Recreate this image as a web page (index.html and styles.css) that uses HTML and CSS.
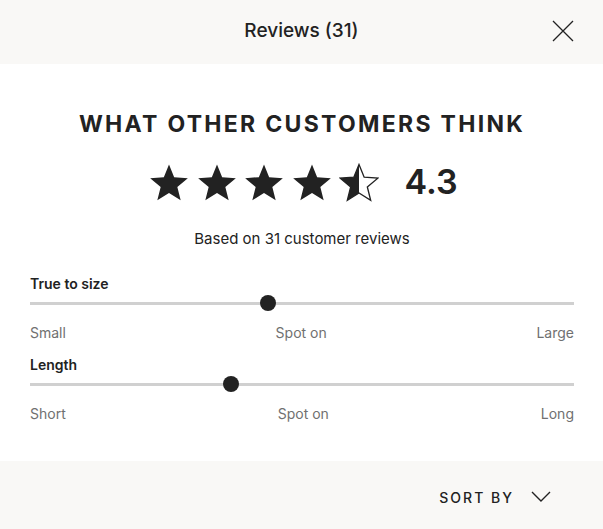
FILE: index.html
```html
<!DOCTYPE html>
<html lang="en">
<head>
    <meta charset="UTF-8">
    <meta name="viewport" content="width=device-width, initial-scale=1.0">
    <title>Reviews</title>
    <link rel="stylesheet" href="styles.css">
</head>
<body>

    <div class="modal">
        <!-- Header -->
        <div class="modal-header">
            <h2>Reviews (31)</h2>
            <button class="close-btn" aria-label="Close">
                <svg width="22" height="22" viewBox="0 0 22 22"><path d="M1 1L21 21M21 1L1 21" stroke="#222" stroke-width="1.3" fill="none"/></svg>
            </button>
        </div>

        <!-- Summary -->
        <div class="modal-body">
            <h1>What other customers think</h1>
            <div class="rating">
                <div class="stars">
                    <svg class="star" viewBox="0 0 24 24"><path d="M12 1.5l3.1 7.6 8.2.6-6.3 5.3 2 8L12 18.6 5 23l2-8L.7 9.7l8.2-.6z" fill="#222"/></svg>
                    <svg class="star" viewBox="0 0 24 24"><path d="M12 1.5l3.1 7.6 8.2.6-6.3 5.3 2 8L12 18.6 5 23l2-8L.7 9.7l8.2-.6z" fill="#222"/></svg>
                    <svg class="star" viewBox="0 0 24 24"><path d="M12 1.5l3.1 7.6 8.2.6-6.3 5.3 2 8L12 18.6 5 23l2-8L.7 9.7l8.2-.6z" fill="#222"/></svg>
                    <svg class="star" viewBox="0 0 24 24"><path d="M12 1.5l3.1 7.6 8.2.6-6.3 5.3 2 8L12 18.6 5 23l2-8L.7 9.7l8.2-.6z" fill="#222"/></svg>
                    <svg class="star" viewBox="0 0 24 24">
                        <path d="M12 1.5l3.1 7.6 8.2.6-6.3 5.3 2 8L12 18.6 5 23l2-8L.7 9.7l8.2-.6z" fill="none" stroke="#222" stroke-width="0.8" stroke-linejoin="miter"/>
                        <path d="M12 1.5V18.6L5 23l2-8L.7 9.7l8.2-.6z" fill="#222"/>
                    </svg>
                </div>
                <span class="score">4.3</span>
            </div>
            <p class="based">Based on 31 customer reviews</p>

            <div class="fit">
                <div class="fit-label">True to size</div>
                <div class="track"><span class="dot" style="left: 43.75%"></span></div>
                <div class="fit-scale"><span>Small</span><span>Spot on</span><span>Large</span></div>
            </div>

            <div class="fit">
                <div class="fit-label">Length</div>
                <div class="track"><span class="dot" style="left: 36.95%"></span></div>
                <div class="fit-scale"><span>Short</span><span>Spot on</span><span>Long</span></div>
            </div>
        </div>

        <!-- Footer -->
        <div class="modal-footer">
            <button class="sort-btn">
                Sort by
                <svg width="20" height="12" viewBox="0 0 20 12"><path d="M1 1l9 9 9-9" stroke="#222" stroke-width="1.4" fill="none"/></svg>
            </button>
        </div>
    </div>

</body>
</html>
```

FILE: styles.css
```css
body {
    margin: 0;
    font-family: "Inter", "Lato", sans-serif;
    color: #222;
    background-color: #fff;
}
.modal {
    width: 603px;
    height: 529px;
    display: flex;
    flex-direction: column;
}
.modal-header {
    height: 64px;
    background-color: #f9f8f6;
    display: flex;
    align-items: center;
    justify-content: center;
    position: relative;
}
.modal-header h2 {
    margin: 0 0 4px;
    font-size: 19px;
    font-weight: 500;
}
.close-btn {
    position: absolute;
    right: 29px;
    top: 20px;
    border: none;
    background: none;
    padding: 0;
    width: 22px;
    height: 22px;
}
.modal-body {
    flex: 1;
    padding: 0 29px 0 30px;
}
.modal-body h1 {
    margin: 45px 0 0;
    text-align: center;
    font-size: 23px;
    font-weight: 700;
    letter-spacing: 2.3px;
    text-transform: uppercase;
    line-height: 30px;
}
.rating {
    display: flex;
    align-items: center;
    justify-content: center;
    margin-top: 23px;
    gap: 25px;
    padding-left: 3px;
}
.stars {
    display: flex;
    gap: 7.5px;
}
.star {
    width: 40px;
    height: 40px;
}
.score {
    font-size: 34px;
    font-weight: 600;
    line-height: 40px;
}
.based {
    margin: 27px 0 0;
    text-align: center;
    font-size: 15px;
    line-height: 20px;
}
.fit {
    margin-top: 26px;
}
.fit + .fit {
    margin-top: 14px;
}
.fit-label {
    font-size: 14px;
    font-weight: 600;
    line-height: 18px;
}
.track {
    position: relative;
    height: 3px;
    background-color: #d0d0d0;
    margin-top: 9px;
}
.dot {
    position: absolute;
    top: -7px;
    width: 16px;
    height: 16px;
    margin-left: -8px;
    border-radius: 50%;
    background-color: #222;
}
.fit-scale {
    display: flex;
    justify-content: space-between;
    margin-top: 19px;
    font-size: 14px;
    line-height: 18px;
    color: #707070;
}
.modal-footer {
    height: 68px;
    background-color: #f9f8f6;
    display: flex;
    align-items: center;
    justify-content: flex-end;
    padding-right: 52px;
    padding-top: 4px;
    box-sizing: border-box;
}
.sort-btn {
    border: none;
    background: none;
    padding: 0;
    display: flex;
    align-items: center;
    gap: 17px;
    font-family: inherit;
    font-size: 14px;
    font-weight: 500;
    letter-spacing: 2px;
    text-transform: uppercase;
    color: #222;
}
```
